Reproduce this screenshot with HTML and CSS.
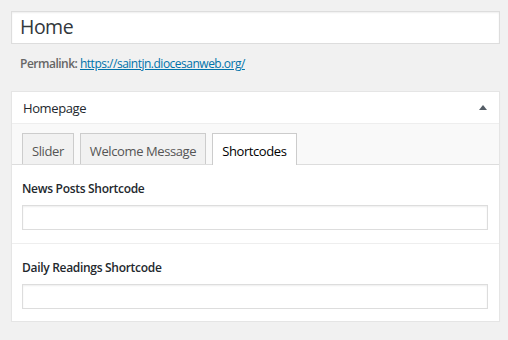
FILE: index.html
```html
<!DOCTYPE html>
<html>
<head>
<meta charset="utf-8">
<link rel="stylesheet" href="styles.css">
</head>
<body>
<div class="wrap">
  <div class="title-input">Home</div>
  <div class="permalink"><strong>Permalink:</strong> <a href="#">https://saintjn.diocesanweb.org/</a></div>
  <div class="postbox">
    <div class="postbox-head">
      <span class="postbox-title">Homepage</span>
      <span class="toggle"></span>
    </div>
    <div class="tabs">
      <div class="tab">Slider</div>
      <div class="tab">Welcome Message</div>
      <div class="tab active">Shortcodes</div>
    </div>
    <div class="field">
      <label class="field-label">News Posts Shortcode</label>
      <div class="text-input"></div>
    </div>
    <div class="field">
      <label class="field-label">Daily Readings Shortcode</label>
      <div class="text-input"></div>
    </div>
  </div>
</div>
</body>
</html>
```
FILE: styles.css
```css
html, body {
  margin: 0;
  padding: 0;
  background: #f1f1f1;
  font-family: "Open Sans", "Noto Sans", sans-serif;
  color: #23282d;
}
.wrap {
  padding: 11px 8px 0 11px;
  width: 489px;
}
.title-input {
  box-sizing: border-box;
  height: 33px;
  background: #fff;
  border: 1px solid #ddd;
  box-shadow: inset 0 1px 2px rgba(0,0,0,0.07);
  font-size: 19.5px;
  letter-spacing: -0.5px;
  line-height: 30px;
  padding: 0 8px;
  color: #32373c;
}
.permalink {
  margin-top: 11px;
  padding-left: 9px;
  font-size: 12px;
  letter-spacing: -0.5px;
  line-height: 18px;
  color: #666;
}
.permalink strong {
  font-weight: 600;
}
.permalink a {
  color: #0073aa;
  text-decoration: underline;
}
.postbox {
  margin-top: 18px;
  background: #fff;
  border: 1px solid #e5e5e5;
  box-shadow: 0 1px 1px rgba(0,0,0,0.04);
  padding-bottom: 12px;
}
.postbox-head {
  display: flex;
  align-items: center;
  justify-content: space-between;
  height: 31px;
  padding: 0 12px 0 11px;
  border-bottom: 1px solid #eee;
}
.postbox-title {
  font-size: 13px;
  letter-spacing: -0.4px;
  color: #23282d;
}
.toggle {
  width: 0;
  height: 0;
  border-left: 4px solid transparent;
  border-right: 4px solid transparent;
  border-bottom: 5px solid #555d66;
}
.tabs {
  display: flex;
  gap: 6px;
  align-items: flex-end;
  background: #f9f9f9;
  border-bottom: 1px solid #ddd;
  padding: 9px 10px 0 9px;
  height: 31px;
}
.tab {
  box-sizing: border-box;
  height: 31px;
  padding: 0 9px;
  border: 1px solid #ccc;
  border-bottom: none;
  background: #f1f1f1;
  font-size: 13px;
  letter-spacing: -0.4px;
  line-height: 34px;
  color: #555;
}
.tab:first-child {
  margin-left: 1px;
}
.tab.active {
  background: #fff;
  color: #000;
  height: 32px;
  margin-bottom: -1px;
}
.field {
  padding: 15px 10px 13px 10px;
  border-bottom: 1px solid #eee;
}
.field:last-child {
  border-bottom: none;
  padding-bottom: 0;
}
.field-label {
  display: block;
  font-size: 12px;
  letter-spacing: -0.3px;
  font-weight: 600;
  line-height: 18px;
  color: #23282d;
}
.text-input {
  box-sizing: border-box;
  margin-top: 7px;
  height: 25px;
  width: 466px;
  background: #fff;
  border: 1px solid #ddd;
  box-shadow: inset 0 1px 2px rgba(0,0,0,0.07);
}
```
